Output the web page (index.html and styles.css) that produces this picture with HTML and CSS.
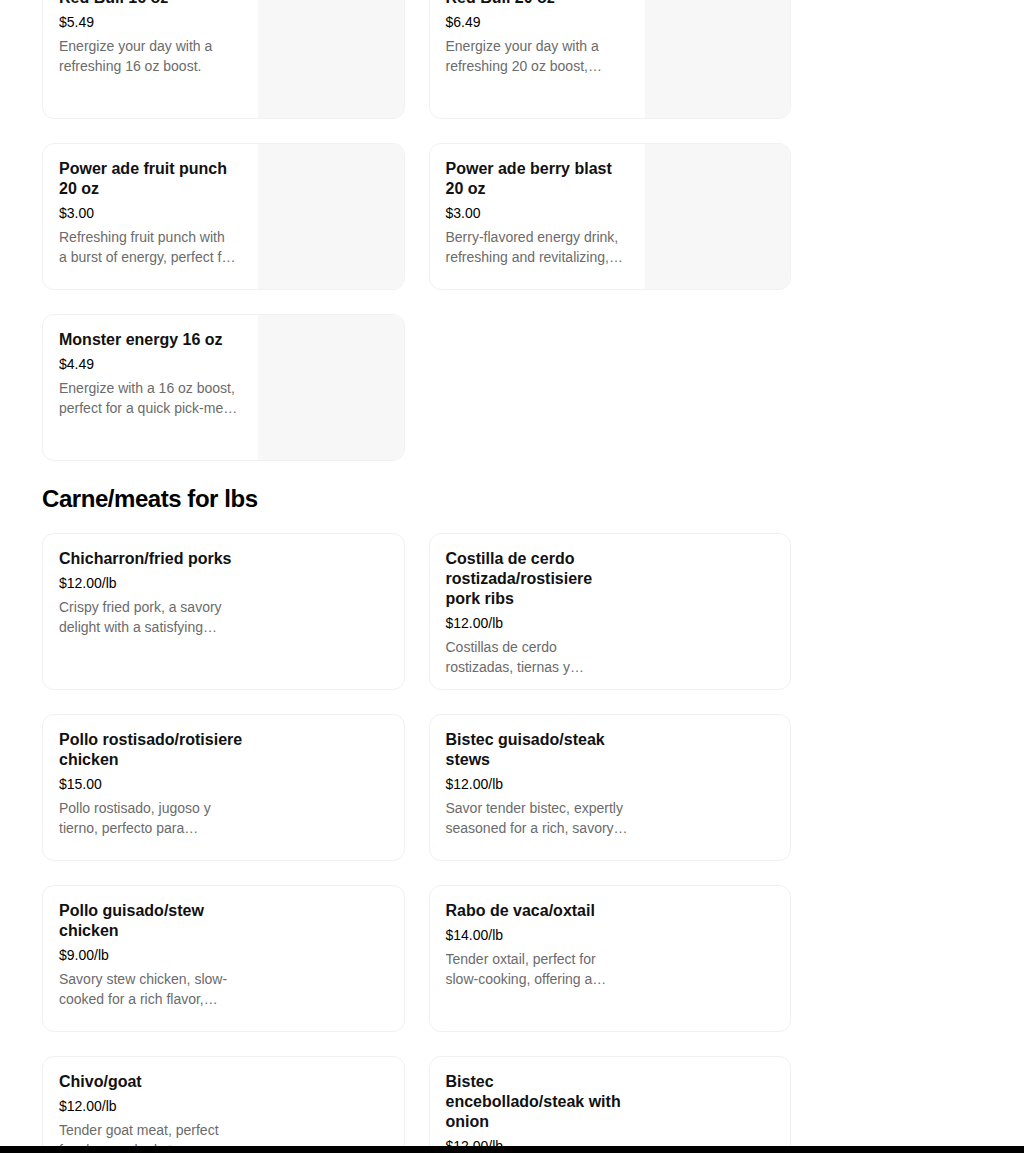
FILE: index.html
```html
<!DOCTYPE html>
<html lang="en">
<head>
<meta charset="utf-8">
<title>Menu</title>
<link rel="stylesheet" href="styles.css">
</head>
<body>
<main class="menu">
  <section class="section section-first">
    <div class="grid">
      <div class="card">
        <div class="info">
          <div class="title">Red Bull 16 oz</div>
          <div class="price">$5.49</div>
          <div class="desc"><span class="line">Energize your day with a</span><span class="line">refreshing 16 oz boost.</span></div>
        </div>
        <div class="thumb"></div>
      </div>
      <div class="card">
        <div class="info">
          <div class="title">Red Bull 20 oz</div>
          <div class="price">$6.49</div>
          <div class="desc"><span class="line">Energize your day with a</span><span class="line">refreshing 20 oz boost,…</span></div>
        </div>
        <div class="thumb"></div>
      </div>
      <div class="card">
        <div class="info">
          <div class="title">Power ade fruit punch 20 oz</div>
          <div class="price">$3.00</div>
          <div class="desc"><span class="line">Refreshing fruit punch with</span><span class="line">a burst of energy, perfect f…</span></div>
        </div>
        <div class="thumb"></div>
      </div>
      <div class="card">
        <div class="info">
          <div class="title">Power ade berry blast 20 oz</div>
          <div class="price">$3.00</div>
          <div class="desc"><span class="line">Berry-flavored energy drink,</span><span class="line">refreshing and revitalizing,…</span></div>
        </div>
        <div class="thumb"></div>
      </div>
      <div class="card">
        <div class="info">
          <div class="title">Monster energy 16 oz</div>
          <div class="price">$4.49</div>
          <div class="desc"><span class="line">Energize with a 16 oz boost,</span><span class="line">perfect for a quick pick-me…</span></div>
        </div>
        <div class="thumb"></div>
      </div>
    </div>
  </section>

  <section class="section">
    <h2 class="section-title">Carne/meats for lbs</h2>
    <div class="grid">
      <div class="card">
        <div class="info">
          <div class="title">Chicharron/fried porks</div>
          <div class="price">$12.00/lb</div>
          <div class="desc"><span class="line">Crispy fried pork, a savory</span><span class="line">delight with a satisfying…</span></div>
        </div>
      </div>
      <div class="card">
        <div class="info">
          <div class="title">Costilla de cerdo rostizada/rostisiere pork ribs</div>
          <div class="price">$12.00/lb</div>
          <div class="desc"><span class="line">Costillas de cerdo</span><span class="line">rostizadas, tiernas y…</span></div>
        </div>
      </div>
      <div class="card">
        <div class="info">
          <div class="title">Pollo rostisado/rotisiere chicken</div>
          <div class="price">$15.00</div>
          <div class="desc"><span class="line">Pollo rostisado, jugoso y</span><span class="line">tierno, perfecto para…</span></div>
        </div>
      </div>
      <div class="card">
        <div class="info">
          <div class="title">Bistec guisado/steak stews</div>
          <div class="price">$12.00/lb</div>
          <div class="desc"><span class="line">Savor tender bistec, expertly</span><span class="line">seasoned for a rich, savory…</span></div>
        </div>
      </div>
      <div class="card">
        <div class="info">
          <div class="title">Pollo guisado/stew chicken</div>
          <div class="price">$9.00/lb</div>
          <div class="desc"><span class="line">Savory stew chicken, slow-</span><span class="line">cooked for a rich flavor,…</span></div>
        </div>
      </div>
      <div class="card">
        <div class="info">
          <div class="title">Rabo de vaca/oxtail</div>
          <div class="price">$14.00/lb</div>
          <div class="desc"><span class="line">Tender oxtail, perfect for</span><span class="line">slow-cooking, offering a…</span></div>
        </div>
      </div>
      <div class="card">
        <div class="info">
          <div class="title">Chivo/goat</div>
          <div class="price">$12.00/lb</div>
          <div class="desc"><span class="line">Tender goat meat, perfect</span><span class="line">for slow-cooked stews…</span></div>
        </div>
      </div>
      <div class="card">
        <div class="info">
          <div class="title">Bistec encebollado/steak with onion</div>
          <div class="price">$12.00/lb</div>
          <div class="desc"><span class="line">Juicy steak smothered in</span><span class="line">sautéed onions, full of…</span></div>
        </div>
      </div>
    </div>
  </section>
</main>
<div class="bottom-bar"></div>
</body>
</html>
```

FILE: styles.css
```css
html, body {
  margin: 0;
  padding: 0;
  background: #ffffff;
}

body {
  font-family: "Liberation Sans", Arial, sans-serif;
  color: #000000;
  overflow: hidden;
  height: 1153px;
}

.menu {
  width: 749px;
  padding: 0 0 0 42px;
}

.section-first {
  margin-top: -28px;
}

.section-title {
  margin: 22px 0 18px;
  font-family: "Liberation Sans", Arial, sans-serif;
  font-size: 24px;
  line-height: 32px;
  font-weight: 700;
  letter-spacing: -0.45px;
  color: #000000;
}

.grid {
  display: grid;
  grid-template-columns: 1fr 1fr;
  column-gap: 24px;
  row-gap: 24px;
}

.card {
  display: flex;
  min-height: 147px;
  box-sizing: border-box;
  border: 1px solid #f1f1f1;
  border-radius: 12px;
  overflow: hidden;
  background: #ffffff;
}

.info {
  flex: 0 0 215px;
  box-sizing: border-box;
  padding: 15px 15px 12px 16px;
  min-width: 0;
}

.thumb {
  flex: 1 1 auto;
  background: #f7f7f7;
}

.title {
  font-family: "Liberation Sans", Arial, sans-serif;
  font-weight: 700;
  font-size: 16px;
  line-height: 20px;
  color: #111111;
}

.price {
  margin-top: 4px;
  font-size: 14px;
  line-height: 20px;
  color: #000000;
}

.desc {
  margin-top: 4px;
  font-size: 14px;
  line-height: 20px;
  color: #6b6b6b;
}

.line {
  display: block;
  white-space: nowrap;
  overflow: hidden;
  text-overflow: ellipsis;
}

.bottom-bar {
  position: fixed;
  left: 0;
  right: 0;
  bottom: 0;
  height: 7px;
  background: #000000;
}
```
